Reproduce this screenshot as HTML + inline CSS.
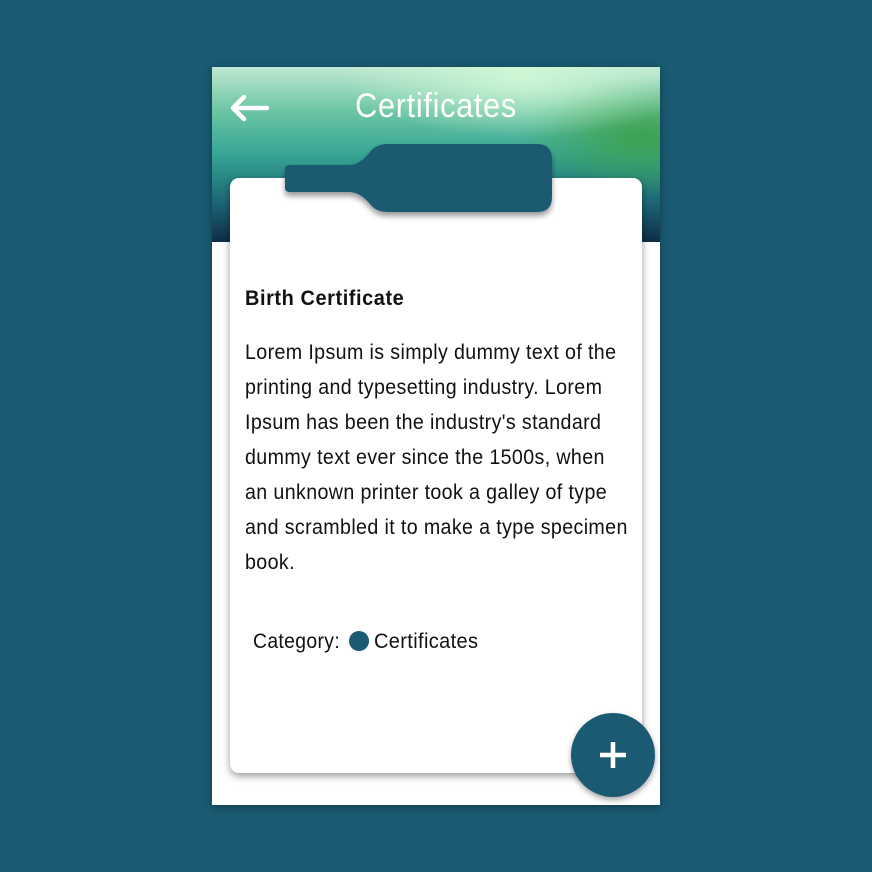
<!DOCTYPE html>
<html><head><style>
html,body{margin:0;padding:0;width:872px;height:872px;background:#1a5a72;overflow:hidden;font-family:"Liberation Sans",sans-serif}
.phone{position:absolute;left:212px;top:67px;width:448px;height:738px;background:#fff;box-shadow:0 2px 8px rgba(0,0,0,.35)}
.hdr{position:absolute;left:0;top:0;width:448px;height:175px;
background:
radial-gradient(ellipse 180px 60px at 310px 10px,rgba(210,250,215,.9),rgba(210,250,215,0)),
radial-gradient(ellipse 120px 60px at 430px 70px,rgba(60,160,70,.9),rgba(60,160,70,0)),
linear-gradient(180deg,#bfe8d2 0%,#6cc5a4 25%,#3ba896 48%,#2a8a86 62%,#1b5f72 80%,#0f2d45 100%)}
.title{position:absolute;left:0;width:448px;top:20px;text-align:center;color:#fff;font-size:34px;letter-spacing:0.8px;transform:scaleX(.9)}
.card{position:absolute;left:18px;top:111px;width:412px;height:595px;background:#fff;border-radius:9px;box-shadow:0 3px 8px rgba(0,0,0,.4)}
.h{position:absolute;left:33px;top:220px;font-size:21px;font-weight:bold;transform:scaleX(.95);transform-origin:left;color:#111;letter-spacing:.6px}
.p{position:absolute;left:33px;top:268px;font-size:21px;line-height:35px;color:#111;white-space:nowrap;transform:scaleX(.935);transform-origin:left;letter-spacing:.4px}
.cat{position:absolute;left:41px;top:563px;font-size:21px;color:#111;white-space:nowrap;transform:scaleX(.92);transform-origin:left;letter-spacing:.4px}
.cat2{position:absolute;left:162px;top:563px;font-size:21px;color:#111;white-space:nowrap;transform:scaleX(.95);transform-origin:left;letter-spacing:.4px}
.dot{position:absolute;left:137px;top:564px;width:20px;height:20px;border-radius:50%;background:#1a5a72}
.fab{position:absolute;left:359px;top:646px;width:84px;height:84px;border-radius:50%;background:#1a5a72;box-shadow:0 3px 6px rgba(0,0,0,.35)}
</style></head><body>
<div class="phone">
<div class="hdr"></div>
<svg style="position:absolute;left:16px;top:26px" width="42" height="30" viewBox="0 0 42 30"><path d="M5 15H39M5 15L16 4M5 15L16 26" stroke="#fff" stroke-width="4.5" fill="none" stroke-linecap="round" stroke-linejoin="round"/></svg>
<div class="title">Certificates</div>
<div class="card"></div>
<svg style="position:absolute;left:70px;top:75px;overflow:visible" width="272" height="74" viewBox="0 0 272 74">
<defs><filter id="s" x="-10%" y="-30%" width="120%" height="170%"><feDropShadow dx="0" dy="4" stdDeviation="3" flood-color="#000" flood-opacity=".4"/></filter></defs>
<path filter="url(#s)" fill="#1a5a72" d="M8 23H67Q78 23 88 10Q94 2 106 2H255Q270 2 270 18V55Q270 70 255 70H106Q94 70 88 62Q78 50 67 50H8Q3 50 3 46V27Q3 23 8 23Z"/>
</svg>
<div class="h">Birth Certificate</div>
<div class="p">Lorem Ipsum is simply dummy text of the<br>printing and typesetting industry. Lorem<br>Ipsum has been the industry's standard<br>dummy text ever since the 1500s, when<br>an unknown printer took a galley of type<br>and scrambled it to make a type specimen<br>book.</div>
<div class="cat">Category:</div>
<div class="dot"></div>
<div class="cat2">Certificates</div>
<div class="fab"><svg width="84" height="84" viewBox="0 0 84 84"><path d="M42 29V55M29 42H55" stroke="#fff" stroke-width="4.5"/></svg></div>
</div>
</body></html>
